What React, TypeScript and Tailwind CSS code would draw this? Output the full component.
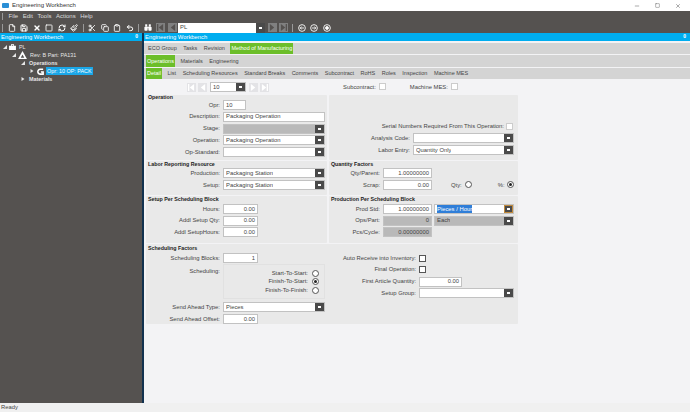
import type { ReactNode } from "react";
import { Clipboard, Copy, File, Minus, Paintbrush, RefreshCw, Save, Scissors, Square, Undo2, X } from "lucide-react";

const labelOp = "w-[77px]";
const labelQty = "w-[54px]";
const labelWide = "w-[84px]";
const labelSched = "w-[90px]";
const full = "w-[102px]";
const short = "w-[35px]";
const qty = "w-[49px]";

function Caret({ focus }: { focus?: boolean }) {
  return (
    <span className={`flex h-full w-[9px] shrink-0 items-center justify-center bg-[#4a4a4a] ${focus ? "border border-[#c08a3c]" : ""}`}>
      <span className="h-[2px] w-[3px] bg-white" />
    </span>
  );
}

function Label({ w, children }: { w: string; children: ReactNode }) {
  return <span className={`shrink-0 whitespace-nowrap pr-[3px] text-right text-[#444] ${w}`}>{children}</span>;
}

function Input({ w, value, gray, left }: { w: string; value?: string; gray?: boolean; left?: boolean }) {
  return (
    <span
      className={`flex h-[10px] items-center border border-[#c2c2c2] px-[2px] text-[#444] ${left ? "justify-start" : "justify-end"} ${gray ? "bg-[#b9b9b9]" : "bg-white"} ${w}`}
    >
      {value}
    </span>
  );
}

function Combo({ w, value, gray, selected }: { w: string; value?: string; gray?: boolean; selected?: boolean }) {
  return (
    <span
      className={`flex h-[10px] items-center justify-between border border-[#c2c2c2] text-[#444] ${gray ? "bg-[#b9b9b9]" : "bg-white"} ${w}`}
    >
      <span className={`ml-[2px] truncate ${selected ? "bg-[#2f7ed8] text-white" : ""}`}>{value}</span>
      <Caret focus={selected} />
    </span>
  );
}

function Row({ label, w = labelOp, children }: { label: string; w?: string; children: ReactNode }) {
  return (
    <div className="flex h-[10px] items-center">
      <Label w={w}>{label}</Label>
      {children}
    </div>
  );
}

function Radio({ on }: { on?: boolean }) {
  return (
    <span className="flex h-[7px] w-[7px] shrink-0 items-center justify-center rounded-full border border-[#555] bg-white">
      {on && <span className="h-[3px] w-[3px] rounded-full bg-[#222]" />}
    </span>
  );
}

function Check({ dark }: { dark?: boolean }) {
  return <span className={`h-[7px] w-[7px] shrink-0 border bg-white ${dark ? "border-[#555]" : "border-[#ccc]"}`} />;
}

function Panel({ title, titleH, className, children }: { title?: string; titleH?: string; className?: string; children?: ReactNode }) {
  return (
    <div className="flex flex-col rounded-[1px] bg-[#e9e9e9]">
      {title && (
        <div className={`ml-[2px] flex items-center whitespace-nowrap text-[5.3px] font-bold text-[#222] ${titleH}`}>{title}</div>
      )}
      <div className={`flex min-h-0 flex-1 flex-col ${className ?? ""}`}>{children}</div>
    </div>
  );
}

function Tab({ active, children }: { active?: boolean; children: ReactNode }) {
  return (
    <span className={`flex h-full items-center px-[1px] ${active ? "bg-[#6cbe2a] text-white" : "text-[#444]"}`}>
      {children}
    </span>
  );
}

// first / prev / next / last button, dark in the toolbar, pale in the form
function Nav({ dark, dir, bar }: { dark?: boolean; dir: "l" | "r"; bar?: boolean }) {
  const fill = dark ? "#555250" : "#ffffff";
  return (
    <span className={`flex h-[9px] w-[9px] shrink-0 items-center justify-center ${dark ? "bg-[#808080]" : "bg-[#e3e3e6]"}`}>
      <svg viewBox="0 0 8 8" className="h-[7px] w-[7px]" fill={fill}>
        {dir === "l" ? <polygon points="7,0 7,8 2,4" /> : <polygon points="1,0 1,8 6,4" />}
        {bar && (dir === "l" ? <rect x="0" y="0" width="1.5" height="8" /> : <rect x="6.5" y="0" width="1.5" height="8" />)}
      </svg>
    </span>
  );
}

function Arrow({ open }: { open?: boolean }) {
  return (
    <svg viewBox="0 0 4 4" className="h-[4px] w-[4px] shrink-0" fill="#e6e6e6">
      {open ? <polygon points="4,0 4,4 0,4" /> : <polygon points="0.5,0 3.5,2 0.5,4" />}
    </svg>
  );
}

function CircleIcon({ kind }: { kind: "l" | "r" | "x" }) {
  return (
    <svg viewBox="0 0 10 10" className="h-[8px] w-[8px] shrink-0" fill="none" stroke="#fff" strokeWidth="1.1">
      <circle cx="5" cy="5" r="4.2" />
      {kind === "l" && <path d="M7.5 5H3M4.5 3.2 2.8 5l1.7 1.8" />}
      {kind === "r" && <path d="M2.5 5H7M5.5 3.2 7.2 5 5.5 6.8" />}
      {kind === "x" && <circle cx="5" cy="5" r="1.8" fill="#fff" />}
    </svg>
  );
}

function Header() {
  return (
    <div className="flex h-[8px] shrink-0 items-center justify-between bg-[#00adef] px-[1px] text-white">
      <span>Engineering Workbench</span>
      <span className="pr-[3px] text-[5px] font-bold">0</span>
    </div>
  );
}

const icon = "h-[8px] w-[8px] shrink-0 text-white";

export default function App() {
  return (
    <div className="flex h-[412px] w-[690px] flex-col overflow-hidden bg-[#f3f3f5] font-['Liberation_Sans',sans-serif] text-[5.85px]">
      {/* title bar */}
      <div className="flex h-[11px] shrink-0 items-center bg-white pl-[2px] pr-[9px] text-[6px] text-[#333]">
        <span className="mr-[3px] h-[5px] w-[7px] rounded-[1px] bg-[#2a8fd6]" />
        <span>Engineering Workbench</span>
        <span className="ml-auto flex items-center gap-[15px] text-[#555]">
          <Minus className="h-[6px] w-[6px]" />
          <Square className="h-[5px] w-[5px]" />
          <X className="h-[6px] w-[6px]" />
        </span>
      </div>

      {/* menu + toolbar */}
      <div className="flex h-[22px] shrink-0 flex-col bg-[#555250] text-white">
        <div className="flex h-[11px] items-center gap-[4.5px] pl-[2px] text-[6px] text-[#ddd]">
          <span className="mr-[1px] h-[7px] w-px bg-[#999]" />
          <span>File</span>
          <span>Edit</span>
          <span>Tools</span>
          <span>Actions</span>
          <span>Help</span>
        </div>
        <div className="flex h-[11px] items-center gap-[4.5px] pl-[2px]">
          <span className="h-[8px] w-px bg-[#999]" />
          <File className={icon} strokeWidth={2.5} />
          <Save className={icon} strokeWidth={3} />
          <X className={icon} strokeWidth={4} />
          <Square className={icon} strokeWidth={2.5} />
          <RefreshCw className={icon} strokeWidth={3} />
          <Paintbrush className={icon} strokeWidth={2.5} />
          <span className="h-[8px] w-px bg-[#999]" />
          <Scissors className={icon} strokeWidth={2.5} />
          <Copy className={icon} strokeWidth={2.5} />
          <Clipboard className={icon} strokeWidth={2.5} />
          <Undo2 className={icon} strokeWidth={3} />
          <span className="h-[8px] w-px bg-[#999]" />
          <svg viewBox="0 0 10 8" className="h-[7px] w-[8px] shrink-0" fill="#fff">
            <rect x="0.5" y="3" width="4" height="5" rx="1" />
            <rect x="5.5" y="3" width="4" height="5" rx="1" />
            <rect x="1.5" y="0" width="2.5" height="3" />
            <rect x="6" y="0" width="2.5" height="3" />
            <rect x="4" y="3" width="2" height="2" />
          </svg>
          <span className="flex items-center gap-[3px]">
            <Nav dark dir="l" bar />
            <Nav dark dir="l" />
          </span>
          <span className="-ml-[3.5px] flex h-[10px] w-[87px] shrink-0 items-center justify-between bg-white pl-[2px] text-[#444]">
            PL
            <Caret />
          </span>
          <span className="-ml-[2px] flex items-center gap-[2px]">
            <Nav dark dir="r" />
            <Nav dark dir="r" bar />
          </span>
          <span className="h-[8px] w-px bg-[#999]" />
          <CircleIcon kind="l" />
          <CircleIcon kind="r" />
          <CircleIcon kind="x" />
        </div>
      </div>

      <div className="flex min-h-0 flex-1">
        {/* tree */}
        <div className="flex w-[142px] shrink-0 flex-col bg-[#555250] text-[5.4px] text-[#e6e6e6]">
          <div className="text-[5.85px]"><Header /></div>
          <div className="flex flex-col pt-[2px]">
            <div className="flex h-[8px] items-center gap-[2px] pl-[3px]">
              <Arrow open />
              <svg viewBox="0 0 8 7" className="h-[6px] w-[7px] shrink-0" fill="#fff">
                <path d="M0 2h8v5H0zM2.5 0h3v2h-1V1h-1v1h-1z" />
              </svg>
              <span className="ml-[1px]">PL</span>
            </div>
            <div className="flex h-[8px] items-center gap-[2px] pl-[12px]">
              <Arrow open />
              <svg viewBox="0 0 10 9" className="h-[8px] w-[9px] shrink-0" fill="#fff">
                <path d="M5 0 10 9H0z" />
                <path d="M5 4 7 7.5H3z" fill="#555250" />
              </svg>
              <span className="ml-[1px]">Rev: B Part: PA131</span>
            </div>
            <div className="flex h-[8px] items-center gap-[2px] pl-[21px] font-bold">
              <Arrow open />
              <span className="ml-[2px]">Operations</span>
            </div>
            <div className="flex h-[8px] items-center pl-[30px]">
              <Arrow />
              <svg viewBox="0 0 8 8" className="ml-[3px] h-[7px] w-[7px] shrink-0" fill="none" stroke="#fff" strokeWidth="1.8">
                <path d="M7 1.5H3.5A2.5 2.5 0 0 0 1 4v0a2.8 2.8 0 0 0 2.8 3H7V4.5H4.5" />
              </svg>
              <span className="ml-[2px] whitespace-nowrap bg-[#1aa7e8] px-[1px] text-white">Opr: 10 OP: PACK</span>
            </div>
            <div className="flex h-[8px] items-center gap-[2px] pl-[21px] font-bold">
              <Arrow />
              <span className="ml-[2px]">Materials</span>
            </div>
          </div>
        </div>
        <div className="w-[2px] shrink-0 bg-[#12324f]" />

        {/* form */}
        <div className="flex min-w-0 flex-1 flex-col">
          <Header />
          <div className="mt-[2px] flex h-[11px] shrink-0 items-center gap-[4.5px] bg-[#d4d4d4] pl-[3px] text-[5.5px]">
            <Tab>ECO Group</Tab>
            <Tab>Tasks</Tab>
            <Tab>Revision</Tab>
            <Tab active>Method of Manufacturing</Tab>
          </div>
          <div className="mt-[1px] flex h-[12px] shrink-0 items-center gap-[4.5px] bg-[#d4d4d4] pl-[2px] text-[5.5px]">
            <Tab active>Operations</Tab>
            <Tab>Materials</Tab>
            <Tab>Engineering</Tab>
          </div>
          <div className="mt-[1px] flex h-[11px] shrink-0 items-center gap-[4.5px] bg-[#d4d4d4] pl-[2px] text-[5.5px]">
            <Tab active>Detail</Tab>
            <Tab>List</Tab>
            <Tab>Scheduling Resources</Tab>
            <Tab>Standard Breaks</Tab>
            <Tab>Comments</Tab>
            <Tab>Subcontract</Tab>
            <Tab>RoHS</Tab>
            <Tab>Roles</Tab>
            <Tab>Inspection</Tab>
            <Tab>Machine MES</Tab>
          </div>

          <div className="flex h-[16px] shrink-0 items-center text-[#444]">
            <span className="ml-[43px] flex items-center gap-[2px]">
              <Nav dir="l" bar />
              <Nav dir="l" />
              <span className="mx-[1px]"><Combo w="w-[36px]" value="10" /></span>
              <Nav dir="r" />
              <Nav dir="r" bar />
            </span>
            <span className="ml-[74px] flex items-center gap-[3px] whitespace-nowrap">Subcontract: <Check /></span>
            <span className="ml-[24px] flex items-center gap-[3px] whitespace-nowrap">Machine MES: <Check /></span>
          </div>

          <div className="ml-[2px] grid w-[372px] grid-cols-[181px_189px] grid-rows-[65px_34px_47px_83px] gap-x-[2px] gap-y-[1px]">
            <Panel title="Operation" titleH="h-[5px]" className="gap-[1.75px]">
              <Row label="Opr:"><Input w="w-[23px]" value="10" left /></Row>
              <Row label="Description:"><Input w={full} value="Packaging Operation" left /></Row>
              <Row label="Stage:"><Combo w={full} gray /></Row>
              <Row label="Operation:"><Combo w={full} value="Packaging Operation" /></Row>
              <Row label="Op-Standard:"><Combo w={full} /></Row>
            </Panel>
            <Panel className="justify-end gap-[2px] pb-[5px]">
              <div className="flex h-[10px] items-center justify-end pr-[5px] text-[#444]">
                <span className="mr-[2px] whitespace-nowrap">Serial Numbers Required From This Operation:</span>
                <Check />
              </div>
              <Row label="Analysis Code:" w={labelWide}><Combo w="w-[101px]" /></Row>
              <Row label="Labor Entry:" w={labelWide}><Combo w="w-[101px]" value="Quantity Only" /></Row>
            </Panel>

            <Panel title="Labor Reporting Resource" titleH="h-[7px]" className="gap-[2px]">
              <Row label="Production:"><Combo w={full} value="Packaging Station" /></Row>
              <Row label="Setup:"><Combo w={full} value="Packaging Station" /></Row>
            </Panel>
            <Panel title="Quantity Factors" titleH="h-[7px]" className="gap-[2px]">
              <Row label="Qty/Parent:" w={labelQty}><Input w={qty} value="1.00000000" /></Row>
              <div className="flex h-[10px] items-center">
                <Label w={labelQty}>Scrap:</Label>
                <Input w={qty} value="0.00" />
                <span className="ml-[19px] flex items-center gap-[3px] text-[#444]">Qty: <Radio /></span>
                <span className="ml-[26px] flex items-center gap-[2px] text-[#444]">%: <Radio on /></span>
              </div>
            </Panel>

            <Panel title="Setup Per Scheduling Block" titleH="h-[8px]" className="gap-[1.5px]">
              <Row label="Hours:"><Input w={short} value="0.00" /></Row>
              <Row label="Addl Setup Qty:"><Input w={short} value="0.00" /></Row>
              <Row label="Addl SetupHours:"><Input w={short} value="0.00" /></Row>
            </Panel>
            <Panel title="Production Per Scheduling Block" titleH="h-[8px]" className="gap-[1.5px]">
              <div className="flex h-[10px] items-center">
                <Label w={labelQty}>Prod Std:</Label>
                <Input w={qty} value="1.00000000" />
                <span className="ml-[2px]"><Combo w="w-[80px]" value="Pieces / Hour" selected /></span>
              </div>
              <div className="flex h-[10px] items-center">
                <Label w={labelQty}>Ops/Part:</Label>
                <Input w={qty} value="0" gray />
                <span className="ml-[2px]"><Combo w="w-[80px]" value="Each" gray /></span>
              </div>
              <Row label="Pcs/Cycle:" w={labelQty}><Input w={qty} value="0.00000000" gray /></Row>
            </Panel>

            <div className="col-span-2">
              <Panel title="Scheduling Factors" titleH="h-[9px]" className="h-[74px]">
                <div className="grid grid-cols-[181px_189px] gap-x-[2px]">
                  <div className="flex flex-col">
                    <Row label="Scheduling Blocks:"><Input w={short} value="1" /></Row>
                    <div className="mt-[1px] flex h-[35px]">
                      <div className="flex pt-[3px]"><Label w={labelOp}>Scheduling:</Label></div>
                      <div className={`flex flex-col justify-center gap-[1.5px] border border-[#e1e1e1] pr-[5px] text-[#444] ${full}`}>
                        <span className="flex h-[7px] items-center justify-end gap-[4px]">Start-To-Start: <Radio /></span>
                        <span className="flex h-[7px] items-center justify-end gap-[4px]">Finish-To-Start: <Radio on /></span>
                        <span className="flex h-[7px] items-center justify-end gap-[4px]">Finish-To-Finish: <Radio /></span>
                      </div>
                    </div>
                    <div className="mt-[3px] flex flex-col gap-[2px]">
                      <Row label="Send Ahead Type:"><Combo w={full} value="Pieces" /></Row>
                      <Row label="Send Ahead Offset:"><Input w={short} value="0.00" /></Row>
                    </div>
                  </div>
                  <div className="flex flex-col gap-[1.75px]">
                    <Row label="Auto Receive into Inventory:" w={labelSched}><Check dark /></Row>
                    <Row label="Final Operation:" w={labelSched}><Check dark /></Row>
                    <Row label="First Article Quantity:" w={labelSched}><Input w="w-[43px]" value="0.00" /></Row>
                    <Row label="Setup Group:" w={labelSched}><Combo w="w-[95px]" /></Row>
                  </div>
                </div>
              </Panel>
            </div>
          </div>
        </div>
      </div>

      {/* status bar */}
      <div className="flex h-[9px] shrink-0 items-center bg-[#f0f0f0] pl-[1px] text-[#444]">Ready</div>
    </div>
  );
}
